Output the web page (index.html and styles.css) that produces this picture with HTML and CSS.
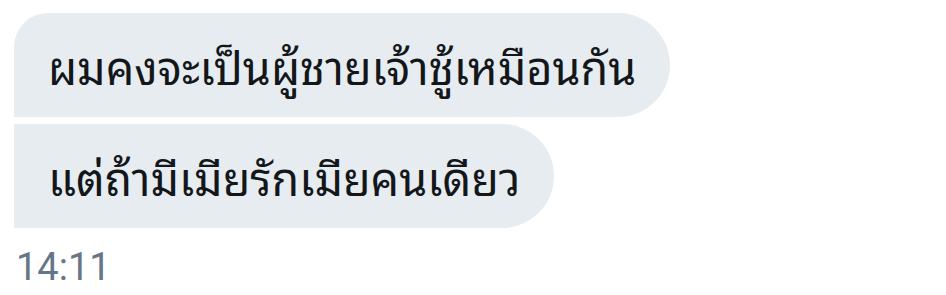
FILE: index.html
```html
<!DOCTYPE html>
<html lang="th">
<head>
    <meta charset="UTF-8">
    <meta name="viewport" content="width=device-width, initial-scale=1.0">
    <title>Messages</title>
    <link rel="stylesheet" href="styles.css">
</head>
<body>
    <div class="thread">
        <div class="bubble first">ผมคงจะเป็นผู้ชายเจ้าชู้เหมือนกัน</div>
        <div class="bubble last">แต่ถ้ามีเมียรักเมียคนเดียว</div>
        <div class="time">14:11</div>
    </div>
</body>
</html>
```

FILE: styles.css
```css
body {
    margin: 0;
    background-color: #fff;
    font-family: "Noto Sans Thai Looped", Loma, Garuda, Waree, "Tlwg Typo", "Noto Sans Thai", sans-serif;
}

.thread {
    display: flex;
    flex-direction: column;
    align-items: flex-start;
    gap: 7px;
    padding: 13px 0 0 14px;
}

.bubble {
    background-color: #e6ecf0;
    color: #14171a;
    font-size: 45px;
    height: 104px;
    box-sizing: border-box;
    padding: 0 34px;
    display: flex;
    align-items: center;
}

.first {
    border-radius: 34px 52px 52px 0;
}

.last {
    border-radius: 0 52px 52px 0;
}

.time {
    color: #657786;
    font-family: Roboto, sans-serif;
    font-size: 38px;
    margin-top: 10px;
    padding-left: 2px;
}
```
